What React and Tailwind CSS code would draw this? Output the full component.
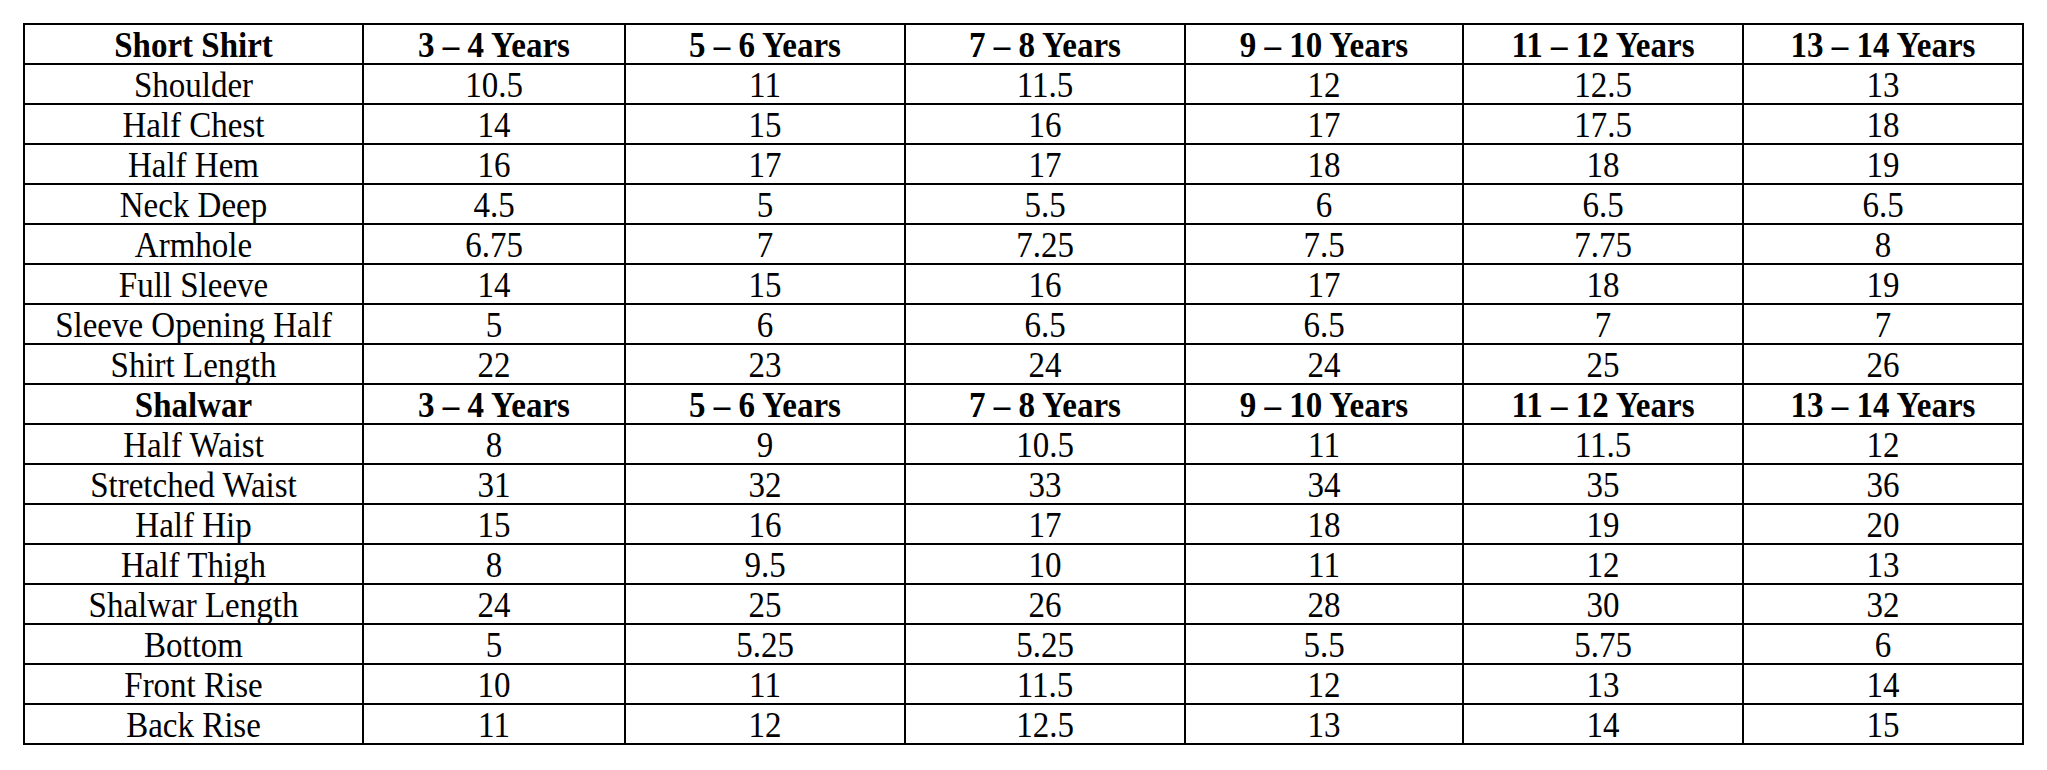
import React from "react";

const head = ["3 – 4 Years", "5 – 6 Years", "7 – 8 Years", "9 – 10 Years", "11 – 12 Years", "13 – 14 Years"];

const rows = [
  { b: true, cells: ["Short Shirt", ...head] },
  { cells: ["Shoulder", "10.5", "11", "11.5", "12", "12.5", "13"] },
  { cells: ["Half Chest", "14", "15", "16", "17", "17.5", "18"] },
  { cells: ["Half Hem", "16", "17", "17", "18", "18", "19"] },
  { cells: ["Neck Deep", "4.5", "5", "5.5", "6", "6.5", "6.5"] },
  { cells: ["Armhole", "6.75", "7", "7.25", "7.5", "7.75", "8"] },
  { cells: ["Full Sleeve", "14", "15", "16", "17", "18", "19"] },
  { cells: ["Sleeve Opening Half", "5", "6", "6.5", "6.5", "7", "7"] },
  { cells: ["Shirt Length", "22", "23", "24", "24", "25", "26"] },
  { b: true, cells: ["Shalwar", ...head] },
  { cells: ["Half Waist", "8", "9", "10.5", "11", "11.5", "12"] },
  { cells: ["Stretched Waist", "31", "32", "33", "34", "35", "36"] },
  { cells: ["Half Hip", "15", "16", "17", "18", "19", "20"] },
  { cells: ["Half Thigh", "8", "9.5", "10", "11", "12", "13"] },
  { cells: ["Shalwar Length", "24", "25", "26", "28", "30", "32"] },
  { cells: ["Bottom", "5", "5.25", "5.25", "5.5", "5.75", "6"] },
  { cells: ["Front Rise", "10", "11", "11.5", "12", "13", "14"] },
  { cells: ["Back Rise", "11", "12", "12.5", "13", "14", "15"] },
];

export default function App() {
  return (
    <div className="w-[2047px] h-[770px] bg-white pt-[23px] pl-[23px]">
      <div
        className="grid grid-cols-[339px_262px_280px_280px_278px_280px_280px] w-max border-l-2 border-t-2 border-black text-black text-[33px] leading-[38px]"
        style={{ fontFamily: '"Liberation Serif", "Times New Roman", serif' }}
      >
        {rows.map((r, i) =>
          r.cells.map((c, j) => (
            <div
              key={i + "-" + j}
              className={
                "h-[40px] border-r-2 border-b-2 border-black text-center whitespace-nowrap " +
                (r.b ? "font-bold" : "font-normal")
              }
            >
              <span className="inline-block scale-y-[1.08] translate-y-[1px]">{c}</span>
            </div>
          ))
        )}
      </div>
    </div>
  );
}
